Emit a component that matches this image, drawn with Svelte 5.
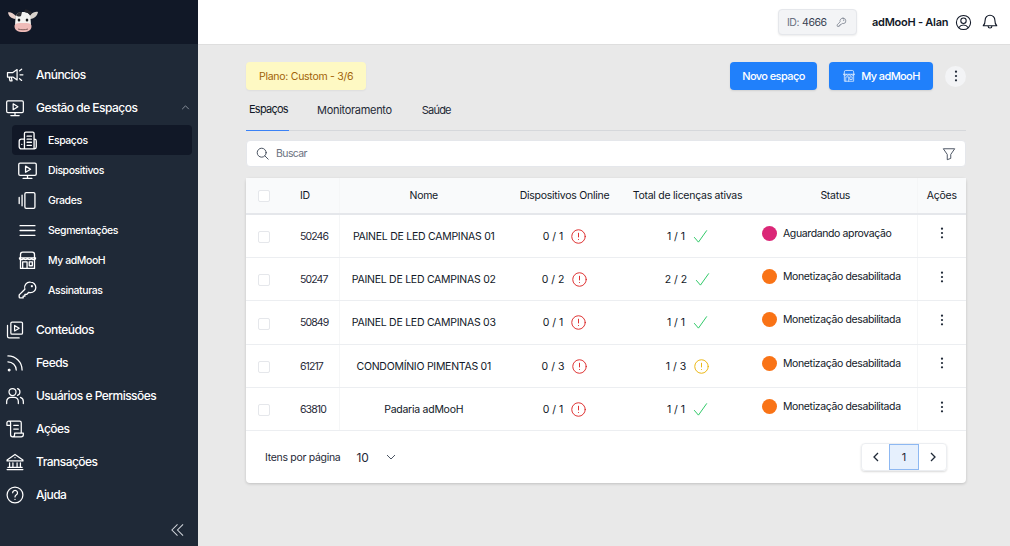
<script>
  const sub = [
    { label: 'Espaços', icon: 'building', active: true },
    { label: 'Dispositivos', icon: 'monitor' },
    { label: 'Grades', icon: 'grades' },
    { label: 'Segmentações', icon: 'bars' },
    { label: 'My adMooH', icon: 'store' },
    { label: 'Assinaturas', icon: 'key' }
  ];
  const lower = [
    { label: 'Conteúdos', icon: 'content' },
    { label: 'Feeds', icon: 'rss' },
    { label: 'Usuários e Permissões', icon: 'users' },
    { label: 'Ações', icon: 'scroll' },
    { label: 'Transações', icon: 'bank' },
    { label: 'Ajuda', icon: 'help' }
  ];
  const rows = [
    { id: 50246, nome: 'PAINEL DE LED CAMPINAS 01', on: '0 / 1', lic: '1 / 1', ok: 'ok', status: 'Aguardando aprovação', color: '#db2777' },
    { id: 50247, nome: 'PAINEL DE LED CAMPINAS 02', on: '0 / 2', lic: '2 / 2', ok: 'ok', status: 'Monetização desabilitada', color: '#f97316' },
    { id: 50849, nome: 'PAINEL DE LED CAMPINAS 03', on: '0 / 1', lic: '1 / 1', ok: 'ok', status: 'Monetização desabilitada', color: '#f97316' },
    { id: 61217, nome: 'CONDOMÍNIO PIMENTAS 01', on: '0 / 3', lic: '1 / 3', ok: 'warn', status: 'Monetização desabilitada', color: '#f97316' },
    { id: 63810, nome: 'Padaria adMooH', on: '0 / 1', lic: '1 / 1', ok: 'ok', status: 'Monetização desabilitada', color: '#f97316' }
  ];
  const paths = {
    monitor: 'M3.5 3.500h17a1.500 1.500 0 0 1 1.500 1.500v11a1.500 1.500 0 0 1-1.500 1.500h-17A1.500 1.500 0 0 1 2 16V5a1.500 1.500 0 0 1 1.500-1.500zM12 17.500v3.500M7 21h10M9.800 7l5.700 3.500-5.700 3.500z',
    building: 'M8.500 21.500V4A1.500 1.500 0 0 1 10 2.500h8A1.500 1.500 0 0 1 19.500 4v17.500M8.500 10.500H5A2.500 2.500 0 0 0 2.500 13v6A2.500 2.500 0 0 0 5 21.500h15A2 2 0 0 0 22 19.500v-7a2 2 0 0 0-2-2h-.5M11.500 7h5M11.500 10.500h5M11.500 14h5M11.500 17.500h5M5.500 16.500h.01',
    grades: 'M10.500 3h8.500a1.500 1.500 0 0 1 1.500 1.500v15a1.500 1.500 0 0 1-1.500 1.500h-8.500A1.500 1.500 0 0 1 9 19.500v-15A1.500 1.500 0 0 1 10.500 3zM5.800 6v12M2.500 8.500v7',
    bars: 'M3.500 6.500h17M3.500 12h17M3.500 17.500h17',
    store: 'M4 9V5a2.500 2.500 0 0 1 2.500-2.500h11A2.500 2.500 0 0 1 20 5v4M2.800 9h18.400M4 9.500v11.500h16V9.500M2.800 9c0 2.800 4.500 2.800 4.600 0 .1 2.800 4.500 2.800 4.600 0 .1 2.800 4.500 2.800 4.600 0 .1 2.800 4.600 2.800 4.600 0M6.500 21v-7.500h5V21M14 13.500h3.500V18H14z',
    key: 'M15.500 2.500a6 6 0 0 1 0 12c-.7 0-1.400-.1-2-.4L11 16.500H9v2H7v2H3.500a1 1 0 0 1-1-1V17l6.500-6.500a6 6 0 0 1 6.500-8zM17 6.500a.5.5 0 1 0 .01 0',
    content: 'M8.500 2.500h11A1.500 1.500 0 0 1 21 4v11.500a1.500 1.500 0 0 1-1.500 1.500h-11A1.500 1.500 0 0 1 7 15.500V4a1.500 1.500 0 0 1 1.500-1.500zM3 6.500V19.500A2 2 0 0 0 5 21.500h12M11.500 6.500l5.500 3.300-5.500 3.300z',
    rss: 'M3.500 3.500c9.500 0 17 7.500 17 17M3.500 10.500c5.500 0 10 4.500 10 10M5 19.500a1 1 0 1 0 .01 0',
    users: 'M9 3a4.200 4.200 0 1 1 0 8.400A4.200 4.200 0 0 1 9 3zM2 21v-2.500a5 5 0 0 1 5-5h4a5 5 0 0 1 5 5V21M15 3.200a4.200 4.200 0 0 1 0 8M18.500 13.700a5 5 0 0 1 3.500 4.800V21',
    scroll: 'M4.500 2.500h13a2 2 0 0 1 2 2v12.500M4.500 2.500a2.200 2.200 0 0 0-2.200 2.200V7.500h4.400V4.700a2.200 2.200 0 0 0-2.200-2.200zM6.700 5v14a2.500 2.500 0 0 0 2.500 2.500h10.300a2.500 2.500 0 0 0 2.500-2.500v-2H11.500v2a2.400 2.400 0 0 1-4.800 0M10.500 7.500h5.500M10.500 12h5.500',
    bank: 'M2.500 9.500L12 3l9.500 6.500v1.200h-19zM2.500 21h19M5.500 18.500v-5.500M9.500 18.500v-5.500M14.500 18.500v-5.500M18.500 18.500v-5.500M3.500 18.500h17M12 6.800h.01',
    help: 'M12 2.500a9.500 9.500 0 1 1 0 19 9.500 9.500 0 0 1 0-19zM9.200 9.300a2.900 2.900 0 1 1 4.500 2.500c-1 .7-1.700 1.300-1.700 2.500M12 17.300h.01',
    megaphone: 'M3 9h6.500L14.500 5.500v12.500L9.500 14.500H3zM5 14.500l1 4.500h2.500l-1-4.500M18 11.800h3.500M17.500 7l2.500-2M17.500 16.500l2.500 2'
  };
</script>

{#snippet icon(name, cls)}
  <svg class={cls} viewBox="0 0 24 24" fill="none" stroke="currentColor" stroke-width="1.500" stroke-linecap="round" stroke-linejoin="round"><path d={paths[name]} /></svg>
{/snippet}

{#snippet alert(cls)}
  <svg class="stat {cls}" viewBox="0 0 16 16" fill="none" stroke="currentColor" stroke-width="1" stroke-linecap="round"><circle cx="8" cy="8" r="7.200" /><path d="M8 4.500v4M8 11.200v.1" /></svg>
{/snippet}

{#snippet dots()}
  <svg class="dots" viewBox="0 0 4 14" fill="currentColor"><circle cx="2" cy="2" r="1.300" /><circle cx="2" cy="7" r="1.300" /><circle cx="2" cy="12" r="1.300" /></svg>
{/snippet}

<div class="app">
  <aside class="side">
    <div class="brand">
      <svg class="cow" viewBox="0 0 30 23">
        <path d="M8 7C5 4 2 2.500 0 3.500c1 4 3 6 7.500 6.500z" fill="#e8cfc9" />
        <path d="M22 6c3-3 6-3.500 8-3-1 4-3 6.500-8 7z" fill="#d8d2cc" />
        <path d="M7.500 9c0-4 3-6 7.500-6s7.500 2 7.500 6l.5 7H7z" fill="#f4f3f1" />
        <path d="M16 3c2 0 5 1 6.500 3.500L24 3.500c-2-2-5-3.500-7-3z" fill="#26262b" />
        <path d="M8 6c1.500-2.500 4-3.500 6-3l-1 4c-2 1-4 .5-5-1z" fill="#2e2e33" />
        <ellipse cx="11" cy="11" rx="1.300" ry="1.600" fill="#1b1b1b" />
        <ellipse cx="19" cy="11" rx="1.300" ry="1.600" fill="#1b1b1b" />
        <path d="M6.500 17c0-2.500 3-3 8.500-3s8.500.5 8.500 3c0 4-3 6-8.500 6s-8.500-2-8.500-6z" fill="#eebbb8" />
        <path d="M10 20c3 1 7 1 10 0" stroke="#6a4a4a" stroke-width=".8" fill="none" />
      </svg>
    </div>
    <nav class="nav">
      <a class="top">{@render icon('megaphone', 'ti')}<span>Anúncios</span></a>
      <a class="top">{@render icon('monitor', 'ti')}<span>Gestão de Espaços</span>
        <svg class="caret" viewBox="0 0 10 6" fill="none" stroke="currentColor" stroke-width="1"><path d="M1 5l4-4 4 4" /></svg>
      </a>
      <div class="subs">
        {#each sub as s}
          <a class="sub" class:active={s.active}>{@render icon(s.icon, 'si')}<span>{s.label}</span></a>
        {/each}
      </div>
      <div class="lower">
        {#each lower as l}
          <a class="top">{@render icon(l.icon, 'ti')}<span>{l.label}</span></a>
        {/each}
      </div>
    </nav>
    <svg class="collapse" viewBox="0 0 14 14" fill="none" stroke="currentColor" stroke-width="1.100"><path d="M7 1L1 7l6 6M13 1L7 7l6 6" /></svg>
  </aside>

  <div class="right">
    <header class="bar">
      <div class="idbox"><span class="idl">ID:</span> <span>4666</span>
        <svg class="idkey" viewBox="0 0 24 24" fill="none" stroke="currentColor" stroke-width="1.500" stroke-linecap="round" stroke-linejoin="round"><path d={paths.key} /></svg>
      </div>
      <span class="user">adMooH - Alan</span>
      <svg class="uicon" viewBox="0 0 24 24" fill="none" stroke="currentColor" stroke-width="1.500" stroke-linecap="round"><circle cx="12" cy="12" r="10" /><circle cx="12" cy="9.500" r="3.800" /><path d="M5.500 19.200c1.500-2.500 3.800-3.700 6.500-3.700s5 1.200 6.500 3.700" /></svg>
      <svg class="bell" viewBox="0 0 24 24" fill="none" stroke="currentColor" stroke-width="1.500" stroke-linecap="round" stroke-linejoin="round"><path d="M5.500 9.500a6.500 6.500 0 0 1 13 0c0 4 1 6 2.500 7.500H3c1.500-1.500 2.500-3.500 2.500-7.500zM9.500 17.500a2.500 2.500 0 0 0 5 0" /></svg>
    </header>

    <main class="main">
      <div class="head">
        <div class="plan">Plano: Custom - 3/6</div>
        <div class="actions">
          <button class="btn b1">Novo espaço</button>
          <button class="btn b2">
            <svg viewBox="0 0 24 24" fill="none" stroke="currentColor" stroke-width="1.400" stroke-linecap="round" stroke-linejoin="round"><path d={paths.store} /></svg>
            My adMooH</button>
          <button class="more">{@render dots()}</button>
        </div>
      </div>

      <div class="tabs">
        <span class="tab on">Espaços</span>
        <span class="tab">Monitoramento</span>
        <span class="tab">Saúde</span>
      </div>

      <div class="search">
        <svg class="lens" viewBox="0 0 16 16" fill="none" stroke="currentColor" stroke-width="1.100" stroke-linecap="round"><circle cx="7" cy="7" r="5.500" /><path d="M11 11l4 4" /></svg>
        <span class="ph">Buscar</span>
        <svg class="filter" viewBox="0 0 16 16" fill="none" stroke="currentColor" stroke-width="1" stroke-linejoin="round"><path d="M1.500 2h13L10 8.500V13l-4 1.500v-6z" /></svg>
      </div>

      <div class="card">
        <table>
          <colgroup>
            <col class="c1" /><col class="c2" /><col class="c3" /><col class="c4" /><col class="c5" /><col class="c6" /><col class="c7" />
          </colgroup>
          <thead>
            <tr>
              <th class="cc"><span class="cb"></span></th>
              <th class="idc">ID</th>
              <th>Nome</th>
              <th>Dispositivos Online</th>
              <th>Total de licenças ativas</th>
              <th>Status</th>
              <th class="ac">Ações</th>
            </tr>
          </thead>
          <tbody>
            {#each rows as r}
              <tr>
                <td class="cc"><span class="cb"></span></td>
                <td class="idc">{r.id}</td>
                <td class="name">{r.nome}</td>
                <td class="pc-cell"><span class="pair"><span>{r.on}</span>{@render alert('red')}</span></td>
                <td class="pc-cell"><span class="pair"><span>{r.lic}</span>
                  {#if r.ok === 'ok'}
                    <svg class="stat green" viewBox="0 0 16 16" fill="none" stroke="currentColor" stroke-width="1" stroke-linecap="round" stroke-linejoin="round"><path d="M1.500 9l4.300 5L14.500 1.800" /></svg>
                  {:else}
                    {@render alert('amber')}
                  {/if}
                </span></td>
                <td class="st"><span class="stw"><i class="dot" style="background:{r.color}"></i>{r.status}</span></td>
                <td class="ac rowdots">{@render dots()}</td>
              </tr>
            {/each}
          </tbody>
        </table>
        <div class="foot">
          <div class="perpage">
            <span class="pl">Itens por página</span>
            <span class="pv">10</span>
            <svg class="pc" viewBox="0 0 10 6" fill="none" stroke="currentColor" stroke-width="1"><path d="M1 1l4 4 4-4" /></svg>
          </div>
          <div class="pager">
            <span class="pg"><svg viewBox="0 0 6 10" fill="none" stroke="currentColor" stroke-width="1.300"><path d="M5 1L1 5l4 4" /></svg></span>
            <span class="pg cur">1</span>
            <span class="pg"><svg viewBox="0 0 6 10" fill="none" stroke="currentColor" stroke-width="1.300"><path d="M1 1l4 4-4 4" /></svg></span>
          </div>
        </div>
      </div>
    </main>
  </div>
</div>

<style>
  :global(body) { margin: 0; font-family: Inter, "Liberation Sans", sans-serif; }
  .app { display: flex; width: 1010px; height: 546px; overflow: hidden; background: #e9e9e9; color: #111827; font-size: 11px; }

  .side { width: 198px; flex: none; background: #1f2937; color: #fff; display: flex; flex-direction: column; position: relative; }
  .brand { height: 44px; background: #111827; box-sizing: border-box; padding: 9px 0 0 8px; }
  .cow { width: 30px; height: 23px; display: block; }
  .nav { display: flex; flex-direction: column; padding-top: 14px; }
  .top { display: flex; align-items: center; height: 33px; padding-left: 5px; font-size: 12px; font-weight: 500; color: #fff; letter-spacing: -.52px; white-space: nowrap; }
  .top span { margin-left: 11px; }
  .ti { width: 20px; height: 20px; flex: none; }
  .caret { width: 9px; height: 5px; margin-left: auto; margin-right: 8px; color: #9ca3af; }
  .subs { display: flex; flex-direction: column; padding: 1px 6px 0 12px; margin-bottom: 8px; }
  .sub { display: flex; align-items: center; height: 30px; font-size: 10.5px; font-weight: 500; border-radius: 4px; padding-left: 5px; color: #fff; letter-spacing: -.42px; }
  .sub span { margin-left: 10px; }
  .sub.active { background: #111827; }
  .si { width: 21px; height: 21px; flex: none; }
  .lower { display: flex; flex-direction: column; }
  .collapse { position: absolute; right: 14px; bottom: 9px; width: 13px; height: 14px; color: #d1d5db; }

  .right { flex: 1; min-width: 0; display: flex; flex-direction: column; }
  .bar { height: 45px; box-sizing: border-box; background: #fff; border-bottom: 1px solid #dedede; display: flex; align-items: center; padding: 0 12px 0 580px; }
  .idbox { flex: none; width: 79px; height: 26px; box-sizing: border-box; border: 1px solid #e5e7eb; border-radius: 4px; background: #f3f4f6; display: flex; align-items: center; padding-left: 8px; gap: 3px; font-size: 10.5px; color: #374151; box-shadow: 0 1px 2px rgba(0,0,0,.08); letter-spacing: -.45px; }
  .idl { color: #6b7280; }
  .idkey { width: 11px; height: 11px; margin-left: 6px; color: #6b7280; }
  .user { margin-left: 15px; font-size: 11px; font-weight: 600; color: #111827; white-space: nowrap; letter-spacing: -.25px; }
  .uicon { width: 17px; height: 17px; margin-left: 7px; flex: none; }
  .bell { width: 18px; height: 18px; margin-left: 9px; flex: none; }

  .main { flex: 1; padding: 17px 44px 0 48px; display: flex; flex-direction: column; }
  .head { display: flex; justify-content: space-between; align-items: flex-start; height: 28px; }
  .plan { height: 28px; box-sizing: border-box; width: 120px; padding-left: 13px; background: #fef9c3; color: #a16207; border-radius: 4px; display: flex; align-items: center; font-size: 10.5px; letter-spacing: -.27px; box-shadow: 0 1px 2px rgba(0,0,0,.05); white-space: nowrap; }
  .actions { display: flex; align-items: center; }
  .btn { height: 28px; border: 0; border-radius: 4px; background: #2080fb; color: #fff; font: 500 11px Inter, sans-serif; letter-spacing: -.6px; display: flex; align-items: center; justify-content: center; padding: 0; box-shadow: 0 1px 2px rgba(0,0,0,.1); }
  .b1 { width: 87px; }
  .b2 { width: 104px; margin-left: 12px; gap: 5px; }
  .b2 svg { width: 14px; height: 14px; opacity: .85; }
  .more { width: 21px; height: 21px; border: 0; border-radius: 50%; background: #f3f4f6; margin-left: 12px; padding: 0; display: flex; align-items: center; justify-content: center; color: #1f2937; }
  .dots { width: 4px; height: 12px; }

  .tabs { display: flex; height: 40px; border-bottom: 1px solid #d6d8db; }
  .tab { height: 41px; display: flex; align-items: center; padding: 0 3px 2px; margin-right: 24px; font-size: 11px; color: #1f2937; box-sizing: border-box; letter-spacing: -.3px; }
  .tab:last-child { letter-spacing: -.8px; }
  .tab.on { color: #111827; border-bottom: 1px solid #3b82f6; width: 43px; margin-right: 25px; letter-spacing: -.75px; }
  .search { height: 27px; margin-top: 9px; background: #fff; border: 1px solid #e5e7eb; border-radius: 4px; box-sizing: border-box; display: flex; align-items: center; padding: 0 9px; }
  .lens { width: 13px; height: 13px; color: #374151; }
  .ph { margin-left: 7px; font-size: 10.5px; color: #6b7280; letter-spacing: -.6px; }
  .filter { width: 14px; height: 14px; margin-left: auto; color: #374151; }

  .card { margin-top: 11px; background: #fff; border-radius: 4px; box-shadow: 0 1px 3px rgba(0,0,0,.18); width: 720px; }
  table { width: 720px; table-layout: fixed; border-collapse: collapse; font-size: 10.5px; letter-spacing: -.26px; }
  .c1 { width: 42px; } .c2 { width: 51px; } .c3 { width: 169px; } .c4 { width: 113px; } .c5 { width: 133px; } .c6 { width: 163px; } .c7 { width: 49px; }
  th { height: 36px; box-sizing: border-box; padding: 0; background: #f9fafb; font-weight: 400; font-size: 10.5px; color: #111827; border-bottom: 2px solid #e5e7eb; text-align: center; }
  td { height: 43.4px; box-sizing: border-box; padding: 1px 0 0; border-bottom: 1px solid #eceef1; text-align: center; color: #111827; }
  .cc { text-align: left; padding-left: 12px; }
  .idc { text-align: left; padding-left: 12px; border-right: 1px solid #f5f6f7; }
  td.idc { color: #1f2937; letter-spacing: -.9px; }
  .ac { border-left: 1px solid #f5f6f7; }
  .cb { display: inline-block; width: 12px; height: 12px; border: 1px solid #e5e7eb; border-radius: 2px; background: #fff; box-sizing: border-box; vertical-align: middle; }
  .pair { display: inline-flex; align-items: center; gap: 8px; letter-spacing: 0; }
  .stat { width: 15px; height: 15px; flex: none; }
  .red { color: #dc2626; }
  .amber { color: #eab308; }
  .green { color: #22c55e; }
  .st { text-align: left; padding: 0 0 2px 8px; }
  .stw { display: inline-flex; align-items: center; gap: 6px; white-space: nowrap; letter-spacing: -.38px; }
  .dot { width: 15px; height: 15px; border-radius: 50%; flex: none; }
  .rowdots { color: #1f2937; padding: 0 0 2px; }

  .foot { height: 52px; display: flex; align-items: center; justify-content: space-between; padding: 0 19px; }
  .perpage { display: flex; align-items: center; }
  .pl { font-size: 10.5px; color: #1f2937; letter-spacing: -.3px; }
  .pv { margin-left: 16px; font-size: 12px; color: #1f2937; }
  .pc { width: 10px; height: 6px; margin-left: 17px; color: #4b5563; }
  .pager { display: flex; height: 28px; border-radius: 4px; box-shadow: 0 1px 2px rgba(0,0,0,.15); border: 1px solid #eceef1; box-sizing: border-box; }
  .pg { width: 27px; display: flex; align-items: center; justify-content: center; font-size: 11px; color: #1f2937; }
  .pg svg { width: 6px; height: 10px; }
  .pg.cur { width: 30px; background: #e6f0fd; box-shadow: inset 0 0 0 1px #8db8f2; }
</style>
